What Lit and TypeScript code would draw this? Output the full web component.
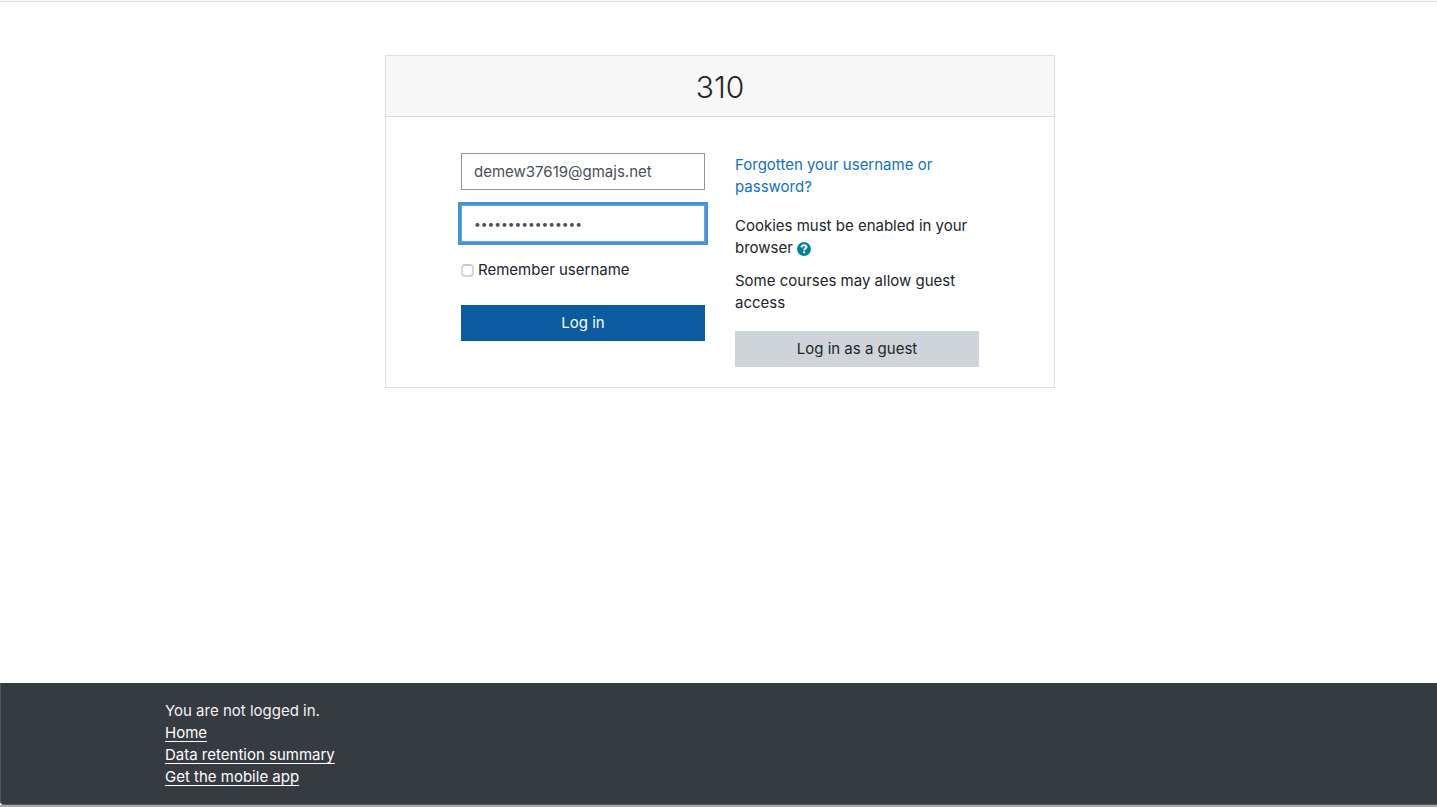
import { LitElement, html, css } from "lit";
import { customElement } from "lit/decorators.js";

@customElement("app-root")
export class AppRoot extends LitElement {
  static styles = css`
    :host {
      display: flex;
      flex-direction: column;
      min-height: 100vh;
      box-sizing: border-box;
      background: #fff;
      color: #212529;
      font: 400 15px/22px Inter, "Liberation Sans", sans-serif;
    }
    *, *::before { box-sizing: border-box; }
    .topline {
      height: 2px;
      background: #f8f8f8;
      border-bottom: 1px solid #dedede;
    }
    main {
      flex: 1;
      padding: 53px 0 0 3px;
    }
    .card {
      max-width: 670px;
      margin: 0 auto;
      border: 1px solid #dfdfdf;
    }
    h1 {
      margin: 0;
      padding: 13px 20px 11px;
      background: #f7f7f7;
      border-bottom: 1px solid #d9d9d9;
      font-size: 30px;
      line-height: 36px;
      font-weight: 300;
      text-align: center;
    }
    .body {
      display: grid;
      grid-template-columns: repeat(2, minmax(0, 244px));
      justify-content: center;
      gap: 30px;
      padding: 36px 20px 20px;
    }
    form {
      display: flex;
      flex-direction: column;
    }
    .field {
      width: 100%;
      height: 37px;
      margin: 0 0 15px;
      padding: 6px 12px;
      border: 1px solid #8f959e;
      border-radius: 0;
      outline: none;
      background: #fff;
      color: #495057;
      font: inherit;
    }
    .field.active {
      border-color: #5fa9ea;
      box-shadow: 0 0 0 3px #4791d4;
      font-size: 12px;
    }
    .remember {
      display: flex;
      align-items: center;
      gap: 4px;
      margin: 2px 0 24px;
    }
    .check {
      appearance: none;
      width: 13px;
      height: 13px;
      margin: 0;
      border: 2px solid #d6d6d6;
      border-top-color: #c8c8c8;
      border-radius: 4px;
      background: #fff;
    }
    .btn {
      width: 100%;
      height: 36px;
      padding: 0 12px;
      border: 0;
      border-radius: 0;
      font: inherit;
      cursor: pointer;
    }
    .primary { background: #0c5a9f; color: #fff; }
    .secondary { background: #ced4da; color: #212529; }
    .forgot {
      display: block;
      margin: 1px 0 17px;
      color: #1070c9;
      text-decoration: none;
    }
    p { margin: 0; }
    .cookies { margin-bottom: 11px; }
    .guest { margin-bottom: 17px; }
    .help {
      display: inline-flex;
      vertical-align: -3px;
      padding: 0;
      border: 0;
      background: none;
      cursor: pointer;
    }
    footer {
      padding: 17px 0 16px 2px;
      background: #363a41;
      border-left: 1px solid #50545b;
      border-bottom: 1px solid #54575c;
      border-bottom-left-radius: 4px;
      color: #f2f3f4;
    }
    .inner {
      display: flex;
      flex-direction: column;
      align-items: flex-start;
      max-width: 1110px;
      margin: 0 auto;
    }
    .inner a {
      color: #fff;
      text-decoration: underline;
      text-underline-offset: 3px;
      text-decoration-skip-ink: none;
    }
    .edge { height: 2px; background: #a9a9ab; }
  `;

  private links = ["Home", "Data retention summary", "Get the mobile app"];

  render() {
    return html`
      <div class="topline"></div>
      <main>
        <section class="card">
          <h1>310</h1>
          <div class="body">
            <form @submit=${(e: Event) => e.preventDefault()}>
              <input class="field" type="text" aria-label="Username" value="demew37619@gmajs.net" />
              <input class="field active" type="password" aria-label="Password" value="passwordpassword" />
              <label class="remember" for="remember">
                <input class="check" type="checkbox" id="remember" />
                <span>Remember username</span>
              </label>
              <button class="btn primary" type="submit">Log in</button>
            </form>
            <div>
              <a class="forgot" href="#">Forgotten your username or password?</a>
              <p class="cookies">
                Cookies must be enabled in your browser
                <button class="help" type="button" aria-label="Help with cookies">
                  <svg width="14" height="14" viewBox="0 0 14 14" aria-hidden="true">
                    <circle cx="7" cy="7" r="6.9" fill="#008196" />
                    <path d="M4.5 5.3C4.7 3.8 5.7 3.2 7 3.2c1.4 0 2.4.8 2.4 1.9C9.4 6.6 7.2 6.5 7.2 8.2" fill="none" stroke="#fff" stroke-width="2.1" />
                    <rect x="6.1" y="9.2" width="2.1" height="2.1" rx=".3" fill="#fff" />
                  </svg>
                </button>
              </p>
              <p class="guest">Some courses may allow guest access</p>
              <button class="btn secondary" type="button">Log in as a guest</button>
            </div>
          </div>
        </section>
      </main>
      <footer>
        <div class="inner">
          <span>You are not logged in.</span>
          ${this.links.map((l) => html`<a href="#">${l}</a>`)}
        </div>
      </footer>
      <div class="edge"></div>
    `;
  }
}
